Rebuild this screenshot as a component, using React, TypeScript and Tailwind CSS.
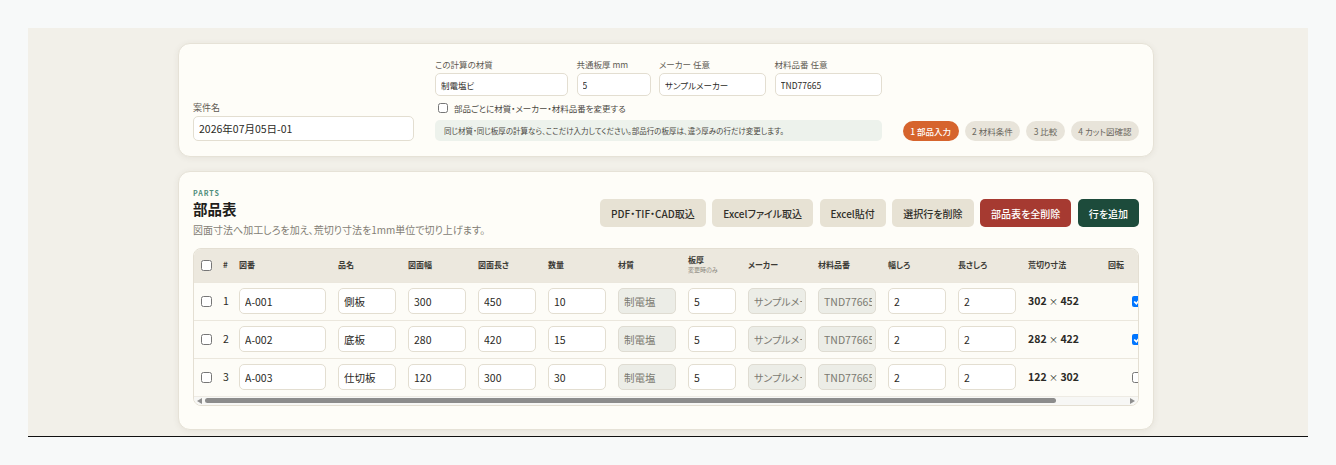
import React from "react";

const rows = [
  { no: "A-001", name: "側板", w: "300", l: "450", qty: "10", cw: "302", cl: "452", rot: true },
  { no: "A-002", name: "底板", w: "280", l: "420", qty: "15", cw: "282", cl: "422", rot: true },
  { no: "A-003", name: "仕切板", w: "120", l: "300", qty: "30", cw: "122", cl: "302", rot: false },
];

const inputCls =
  "block h-[26px] w-full rounded-[5px] border border-[#e3ded1] bg-white px-[5px] text-[10.5px] text-[#2b2a26] outline-none";
const lockedCls =
  "block h-[26px] w-full rounded-[5px] border border-[#dfdcd2] bg-[#ecede7] pl-[5px] pr-[3px] text-[#7b7a71] outline-none";
const topInput =
  "h-[23px] w-full rounded-[5px] border border-[#e3ded1] bg-white px-[5px] text-[8.5px] text-[#2b2a26] outline-none";
const pill = "flex h-[20px] shrink-0 items-center whitespace-nowrap rounded-full px-[7.5px] text-[8.5px]";
const beigeBtn = "h-[28px] rounded-[5px] bg-[#e7e2d4] px-[11px] text-[10px] font-medium text-[#2f2e29]";

function Field({ label, value, width }: { label: string; value: string; width: string }) {
  return (
    <label className={`flex flex-col ${width}`}>
      <span className="mb-[3px] text-[8.5px] leading-[11px] text-[#5f5b53]">{label}</span>
      <input className={topInput} defaultValue={value} />
    </label>
  );
}

export default function App() {
  return (
    <div
      className="min-h-screen bg-[#f7f9f9] px-[28px] pt-[28px] [font-feature-settings:'palt']"
      style={{ fontFamily: '"Noto Sans CJK JP", "Noto Sans", sans-serif' }}
    >
      <div className="h-[409px] overflow-hidden border-b border-[#111] bg-[#f2f0e9] pl-[150px] pt-[15px]">
        {/* 案件ヘッダー */}
        <div className="flex w-[976px] items-end gap-[20px] rounded-[12px] border border-[#e6e2d7] bg-[#fefdf8] pl-[14px] pr-[14px] pb-[15px] pt-[15px] shadow-[0_1px_6px_rgba(70,60,40,0.07)]">
          <label className="flex w-[221px] shrink-0 flex-col">
            <span className="mb-[3px] text-[9px] leading-[11px] text-[#5f5b53]">案件名</span>
            <input
              className="h-[25px] w-full rounded-[5px] border border-[#e3ded1] bg-white px-[5px] text-[10.5px] text-[#2b2a26] outline-none"
              defaultValue="2026年07月05日-01"
            />
          </label>

          <div className="ml-[1px] w-[447px] shrink-0">
            <div className="flex gap-[8.5px]">
              <Field label="この計算の材質" value="制電塩ビ" width="w-[133px]" />
              <Field label="共通板厚 mm" value="5" width="w-[74px]" />
              <Field label="メーカー 任意" value="サンプルメーカー" width="w-[107px]" />
              <Field label="材料品番 任意" value="TND77665" width="w-[107px]" />
            </div>
            <label className="mt-[6px] flex h-[12px] items-center gap-[6px] pl-[3px] text-[8.5px] text-[#4c4943]">
              <input type="checkbox" className="m-0 size-[10px]" />
              部品ごとに材質・メーカー・材料品番を変更する
            </label>
            <div className="mt-[6px] flex h-[21px] items-center rounded-[5px] bg-[#edf2ec] px-[9px] text-[7.5px] text-[#4a4842]">
              同じ材質・同じ板厚の計算なら、ここだけ入力してください。部品行の板厚は、違う厚みの行だけ変更します。
            </div>
          </div>

          <div className="flex flex-1 justify-end gap-[6px]">
            <span className={`${pill} bg-[#d6642d] font-medium text-white`}>1 部品入力</span>
            <span className={`${pill} bg-[#e8e4da] text-[#6b675e]`}>2 材料条件</span>
            <span className={`${pill} bg-[#e8e4da] text-[#6b675e]`}>3 比較</span>
            <span className={`${pill} bg-[#e8e4da] text-[#6b675e]`}>4 カット図確認</span>
          </div>
        </div>

        {/* 部品表 */}
        <div className="mt-[14px] w-[976px] rounded-[12px] border border-[#e6e2d7] bg-[#fefdf8] px-[14px] pb-[23px] pt-[17px] shadow-[0_1px_6px_rgba(70,60,40,0.07)]">
          <div className="flex items-center justify-between">
            <div>
              <div className="text-[7px] font-bold leading-[9px] tracking-[0.14em] text-[#4e8c7a]">PARTS</div>
              <h2 className="mt-[1px] text-[14.5px] font-bold leading-[20px] text-[#1f1e1b]">部品表</h2>
              <p className="mt-[4px] text-[10px] leading-[14px] text-[#837e75]">
                図面寸法へ加工しろを加え、荒切り寸法を1mm単位で切り上げます。
              </p>
            </div>
            <div className="flex gap-[6.5px]">
              <button className={beigeBtn}>PDF・TIF・CAD取込</button>
              <button className={beigeBtn}>Excelファイル取込</button>
              <button className={beigeBtn}>Excel貼付</button>
              <button className={beigeBtn}>選択行を削除</button>
              <button className="h-[28px] rounded-[5px] bg-[#a63a31] px-[11px] text-[10px] font-medium text-white">
                部品表を全削除
              </button>
              <button className="h-[28px] rounded-[5px] bg-[#1d4b3b] px-[11px] text-[10px] font-medium text-white">
                行を追加
              </button>
            </div>
          </div>

          <div className="mt-[11px] overflow-hidden rounded-[8px] border border-[#e4dfd3] bg-[#fdfcf7]">
            <div className="overflow-x-auto [scrollbar-width:none]">
              <table className="w-[1023px] table-fixed border-collapse text-left">
                <thead>
                  <tr className="h-[33px] bg-[#ece8de] text-[8px] font-bold text-[#3b3a35]">
                    <th className="w-[22px] pl-[7px]">
                      <input type="checkbox" className="m-0 block size-[11px]" />
                    </th>
                    <th className="w-[17px] pl-[7px]">#</th>
                    <th className="w-[99px] px-[6px]">図番</th>
                    <th className="w-[70px] px-[6px]">品名</th>
                    <th className="w-[70px] px-[6px]">図面幅</th>
                    <th className="w-[70px] px-[6px]">図面長さ</th>
                    <th className="w-[70px] px-[6px]">数量</th>
                    <th className="w-[70px] px-[6px]">材質</th>
                    <th className="w-[60px] px-[6px] leading-[10px]">
                      板厚
                      <div className="text-[6px] font-normal text-[#8a867d]">変更時のみ</div>
                    </th>
                    <th className="w-[70px] px-[6px]">メーカー</th>
                    <th className="w-[70px] px-[6px]">材料品番</th>
                    <th className="w-[70px] px-[6px]">幅しろ</th>
                    <th className="w-[70px] px-[6px]">長さしろ</th>
                    <th className="w-[80px] px-[6px]">荒切り寸法</th>
                    <th className="w-[115px] px-[6px]">回転</th>
                  </tr>
                </thead>
                <tbody className="[&_td]:py-[5.5px]">
                  {rows.map((r, i) => (
                    <tr key={r.no} className="border-t border-[#ebe7dd]">
                      <td className="pl-[7px]">
                        <input type="checkbox" className="m-0 block size-[11px]" />
                      </td>
                      <td className="pl-[7px] text-[10.5px] leading-[14px] text-[#2b2a26]">{i + 1}</td>
                      <td className="px-[6px]">
                        <input className={inputCls} defaultValue={r.no} />
                      </td>
                      <td className="px-[6px]">
                        <input className={inputCls} defaultValue={r.name} />
                      </td>
                      <td className="px-[6px]">
                        <input className={inputCls} defaultValue={r.w} />
                      </td>
                      <td className="px-[6px]">
                        <input className={inputCls} defaultValue={r.l} />
                      </td>
                      <td className="px-[6px]">
                        <input className={inputCls} defaultValue={r.qty} />
                      </td>
                      <td className="px-[6px]">
                        <input className={`${lockedCls} text-[10.5px]`} defaultValue="制電塩" disabled />
                      </td>
                      <td className="px-[6px]">
                        <input className={inputCls} defaultValue="5" />
                      </td>
                      <td className="px-[6px]">
                        <input className={`${lockedCls} text-[10px]`} defaultValue="サンプルメーカー" disabled />
                      </td>
                      <td className="px-[6px]">
                        <input className={`${lockedCls} text-[10.5px]`} defaultValue="TND77665" disabled />
                      </td>
                      <td className="px-[6px]">
                        <input className={inputCls} defaultValue="2" />
                      </td>
                      <td className="px-[6px]">
                        <input className={inputCls} defaultValue="2" />
                      </td>
                      <td className="whitespace-nowrap px-[6px] text-[10.5px] font-bold leading-[14px] text-[#2b2a26]">
                        {r.cw} <span className="text-[9px] font-normal">×</span> {r.cl}
                      </td>
                      <td className="px-[6px]">
                        <input type="checkbox" defaultChecked={r.rot} className="m-0 ml-[24px] block size-[11px]" />
                      </td>
                    </tr>
                  ))}
                </tbody>
              </table>
            </div>
            {/* scrollbar */}
            <div className="flex h-[9px] items-center gap-[3px] border-t border-[#eeebe4] bg-[#f7f7f5] px-[3px]">
              <svg width="5" height="6" viewBox="0 0 5 6" className="shrink-0">
                <path d="M5 0L0 3L5 6Z" fill="#8f8f8f" />
              </svg>
              <div className="flex-1">
                <div className="h-[5px] w-[92.3%] rounded-full bg-[#8c8c8c]" />
              </div>
              <svg width="5" height="6" viewBox="0 0 5 6" className="shrink-0">
                <path d="M0 0L5 3L0 6Z" fill="#8f8f8f" />
              </svg>
            </div>
          </div>
        </div>
      </div>
    </div>
  );
}
